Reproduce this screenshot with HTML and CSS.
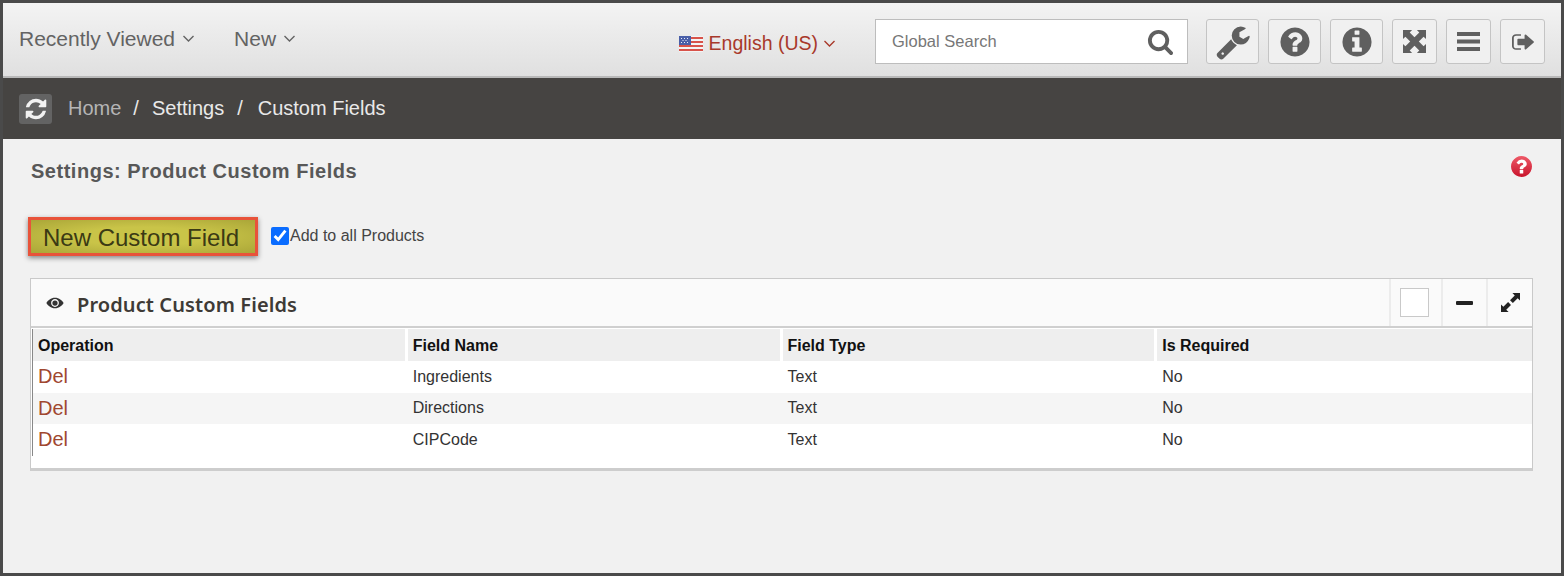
FILE: index.html
```html
<!DOCTYPE html>
<html lang="en">
<head>
<meta charset="utf-8">
<title>Product Custom Fields</title>
<link rel="stylesheet" href="styles.css">
</head>
<body>
<div class="frame">
  <header class="topbar">
    <nav class="nav">
      <a class="nav-item">Recently Viewed<svg class="chev" viewBox="0 0 12 8"><polyline points="1,1 6,6 11,1"/></svg></a>
      <a class="nav-item">New<svg class="chev" viewBox="0 0 12 8"><polyline points="1,1 6,6 11,1"/></svg></a>
    </nav>
    <div class="tools">
      <a class="lang">
        <svg class="flag" viewBox="0 0 24 16">
          <rect width="24" height="16" fill="#f4f4f4"/>
          <path d="M0 1h24v2H0zM0 5h24v2H0zM0 9h24v2H0zM0 13h24v2H0z" fill="#d8534a"/>
          <rect width="12" height="9" fill="#4a5fa8"/>
          <path d="M2 2h1v1H2zM5 2h1v1H5zM8 2h1v1H8zM3.500 4h1v1h-1zM6.500 4h1v1h-1zM2 6h1v1H2zM5 6h1v1H5zM8 6h1v1H8z" fill="#e8ecf6"/>
        </svg>
        <span>English (US)</span>
        <svg class="chev chev-red" viewBox="0 0 12 8"><polyline points="1,1 6,6 11,1"/></svg>
      </a>
      <div class="search">
        <span class="search-text">Global Search</span>
        <svg class="search-icon" viewBox="0 0 1792 1792"><path d="M1216 832q0-185-131.500-316.500t-316.500-131.500-316.500 131.500-131.500 316.500 131.500 316.500 316.500 131.500 316.500-131.500 131.500-316.500zm512 832q0 52-38 90t-90 38q-54 0-90-38l-343-342q-179 124-399 124-143 0-273.500-55.500t-225-150-150-225-55.500-273.500 55.500-273.500 150-225 225-150 273.500-55.500 273.500 55.500 225 150 150 225 55.500 273.500q0 220-124 399l343 343q37 37 37 90z"/></svg>
      </div>
      <div class="icon-buttons">
        <button class="icon-btn wide"><svg class="ico-wrench" viewBox="0 0 1792 1792"><path d="M448 1472q0-26-19-45t-45-19-45 19-19 45 19 45 45 19 45-19 19-45zm644-420l-682 682q-37 37-90 37-52 0-91-37l-106-108q-38-36-38-90 0-53 38-91l681-681q39 98 114.500 173.500t173.500 114.500zm634-435q0 39-23 106-47 134-164.500 217.500t-258.500 83.500q-185 0-316.500-131.500t-131.500-316.500 131.500-316.500 316.500-131.500q58 0 121.500 16.500t107.500 46.500q16 11 16 28t-16 28l-293 169v224l193 107q5-3 79-48.500t135.500-81 70.500-35.500q15 0 23.500 10t8.500 25z"/></svg></button>
        <button class="icon-btn wide"><svg class="ico-circle" viewBox="0 0 1792 1792"><path d="M1024 1376v-192q0-14-9-23t-23-9h-192q-14 0-23 9t-9 23v192q0 14 9 23t23 9h192q14 0 23-9t9-23zm256-672q0-88-55.500-163t-138.500-116-170-41q-243 0-371 213-15 24 8 42l132 100q7 6 19 6 16 0 25-12 53-68 86-92 34-24 86-24 48 0 85.500 26t37.500 59q0 38-20 61t-68 45q-63 28-115.500 86.500t-52.500 125.500v36q0 14 9 23t23 9h192q14 0 23-9t9-23q0-19 21.500-49.500t54.500-49.500q32-18 49-28.500t46-35 44.500-48 28-60.500 12.500-81zm384 192q0 209-103 385.500t-279.500 279.500-385.500 103-385.500-103-279.500-279.500-103-385.500 103-385.500 279.500-279.500 385.500-103 385.500 103 279.500 279.500 103 385.500z"/></svg></button>
        <button class="icon-btn wide"><svg class="ico-circle" viewBox="0 0 1792 1792"><path d="M1152 1376v-160q0-14-9-23t-23-9h-96v-512q0-14-9-23t-23-9h-320q-14 0-23 9t-9 23v160q0 14 9 23t23 9h96v320h-96q-14 0-23 9t-9 23v160q0 14 9 23t23 9h448q14 0 23-9t9-23zm-128-896v-160q0-14-9-23t-23-9h-192q-14 0-23 9t-9 23v160q0 14 9 23t23 9h192q14 0 23-9t9-23zm640 416q0 209-103 385.500t-279.500 279.500-385.500 103-385.500-103-279.500-279.500-103-385.500 103-385.500 279.500-279.500 385.500-103 385.500 103 279.500 279.500 103 385.500z"/></svg></button>
        <button class="icon-btn"><svg class="ico-expand" viewBox="0 0 24 24"><path d="M0 0h9.500L7 2.500l5 5 5-5L14.500 0H24v9.500L21.500 7l-5 5 5 5 2.500-2.500V24h-9.500l2.500-2.500-5-5-5 5L9.500 24H0v-9.500L2.500 17l5-5-5-5L0 9.500z"/></svg></button>
        <button class="icon-btn"><svg class="ico-bars" viewBox="0 0 23 19"><path d="M0 0h23v4H0zM0 7.500h23v4H0zM0 15h23v4H0z"/></svg></button>
        <button class="icon-btn"><svg class="ico-exit" viewBox="64 160 1568 1472" preserveAspectRatio="none"><path d="M704 1440q0 4 1 20t.500 26.500-3 23.500-10 19.500-20.500 6.500h-320q-119 0-203.500-84.500t-84.500-203.500v-704q0-119 84.500-203.500t203.500-84.500h320q13 0 22.500 9.500t9.500 22.500q0 4 1 20t.500 26.500-3 23.500-10 19.500-20.500 6.500h-320q-66 0-113 47t-47 113v704q0 66 47 113t113 47h312l11.500 1 11.500 3 8 5.500 7 9 2 13.500zm928-544q0 26-19 45l-544 544q-19 19-45 19t-45-19-19-45v-288h-448q-26 0-45-19t-19-45v-384q0-26 19-45t45-19h448v-288q0-26 19-45t45-19 45 19l544 544q19 19 19 45z"/></svg></button>
      </div>
    </div>
  </header>

  <div class="crumbs">
    <button class="refresh"><svg viewBox="0 0 1792 1792"><path d="M1639 1056q0 5-1 7-64 268-268 434.500t-478 166.500q-146 0-282.500-55t-243.500-157l-129 129q-19 19-45 19t-45-19-19-45v-448q0-26 19-45t45-19h448q26 0 45 19t19 45-19 45l-137 137q71 66 161 102t187 36q134 0 250-65t186-179q11-17 53-117 8-23 30-23h192q13 0 22.500 9.500t9.500 22.500zm25-800v448q0 26-19 45t-45 19h-448q-26 0-45-19t-19-45 19-45l138-138q-148-137-349-137-134 0-250 65t-186 179q-11 17-53 117-8 23-30 23h-199q-13 0-22.500-9.500t-9.500-22.500v-7q65-268 270-434.500t480-166.500q146 0 284 55.500t245 156.500l130-129q19-19 45-19t45 19 19 45z"/></svg></button>
    <a class="crumb crumb-home">Home</a>
    <span class="crumb-sep">/</span>
    <a class="crumb">Settings</a>
    <span class="crumb-sep sep-wide">/</span>
    <span class="crumb">Custom Fields</span>
  </div>

  <main class="content">
    <div class="title-row">
      <h1 class="page-title">Settings: Product Custom Fields</h1>
      <svg class="help-red" viewBox="128 128 1536 1536">
        <defs><linearGradient id="redg" x1="0" y1="0" x2="0" y2="1"><stop offset="0" stop-color="#ee5a68"/><stop offset="1" stop-color="#c8142c"/></linearGradient></defs>
        <circle cx="896" cy="896" r="768" fill="#fff"/>
        <path fill="url(#redg)" d="M1024 1376v-192q0-14-9-23t-23-9h-192q-14 0-23 9t-9 23v192q0 14 9 23t23 9h192q14 0 23-9t9-23zm256-672q0-88-55.500-163t-138.500-116-170-41q-243 0-371 213-15 24 8 42l132 100q7 6 19 6 16 0 25-12 53-68 86-92 34-24 86-24 48 0 85.500 26t37.500 59q0 38-20 61t-68 45q-63 28-115.500 86.500t-52.500 125.500v36q0 14 9 23t23 9h192q14 0 23-9t9-23q0-19 21.500-49.500t54.500-49.500q32-18 49-28.500t46-35 44.500-48 28-60.500 12.500-81zm384 192q0 209-103 385.500t-279.500 279.500-385.500 103-385.500-103-279.500-279.500-103-385.500 103-385.500 279.500-279.500 385.500-103 385.500 103 279.500 279.500 103 385.500z"/>
      </svg>
    </div>

    <div class="action-row">
      <button class="new-btn">New Custom Field</button>
      <label class="add-all"><input class="add-check" type="checkbox" checked>Add to all Products</label>
    </div>

    <section class="panel">
      <div class="panel-head">
        <svg class="eye" viewBox="0 0 24 16"><path fill-rule="evenodd" d="M12 1C6.500 1 2.500 4.500.5 8c2 3.500 6 7 11.500 7s9.500-3.500 11.500-7C21.500 4.500 17.500 1 12 1zm0 1.800c2.900 0 5.200 2.300 5.200 5.200s-2.300 5.200-5.200 5.200S6.800 10.900 6.800 8 9.100 2.800 12 2.800zM12 4.500A3.500 3.500 0 1 0 12 11.500 3.500 3.500 0 0 0 12 4.500z"/></svg>
        <h2 class="panel-title">Product Custom Fields</h2>
        <div class="panel-controls">
          <div class="ctrl ctrl-box"><span class="square"></span></div>
          <div class="ctrl ctrl-min"><span class="minus"></span></div>
          <div class="ctrl ctrl-exp"><svg class="resize" viewBox="0 0 20 20"><path d="M12 0h8v8l-2.500-2.500L12.500 10.500l-3-3 5-5zM8 20H0v-8l2.500 2.500L7.500 9.500l3 3-5 5z"/></svg></div>
        </div>
      </div>
      <div class="table-wrap">
        <table class="fields">
          <thead>
            <tr><th>Operation</th><th>Field Name</th><th>Field Type</th><th>Is Required</th></tr>
          </thead>
          <tbody>
            <tr><td><a class="del">Del</a></td><td>Ingredients</td><td>Text</td><td>No</td></tr>
            <tr class="alt"><td><a class="del">Del</a></td><td>Directions</td><td>Text</td><td>No</td></tr>
            <tr><td><a class="del">Del</a></td><td>CIPCode</td><td>Text</td><td>No</td></tr>
          </tbody>
        </table>
      </div>
    </section>
  </main>
</div>
</body>
</html>
```

FILE: styles.css
```css
* { box-sizing: border-box; }
html, body { margin: 0; padding: 0; }
body { font-family: "Liberation Sans", Arial, sans-serif; color: #333; }

.frame {
  width: 1564px;
  height: 576px;
  border: 3px solid #4a4a4a;
  display: flex;
  flex-direction: column;
  overflow: hidden;
  background: #f1f1f1;
}

/* top bar */
.topbar {
  height: 75px;
  flex: none;
  display: flex;
  align-items: center;
  justify-content: space-between;
  padding: 4px 16px 0;
  background: linear-gradient(#f3f3f3, #e0e0e0);
  border-bottom: 2px solid #b9b9b9;
}
.nav { display: flex; gap: 39px; padding-bottom: 6px; }
.nav-item { font-size: 21px; color: #636363; display: flex; align-items: center; gap: 7px; white-space: pre; }
.chev { width: 13px; height: 8px; fill: none; stroke: #636363; stroke-width: 1.4; }
.chev-red { stroke: #a8392b; }
.tools { display: flex; align-items: center; }
.lang { display: flex; align-items: center; font-size: 19.500px; color: #a8392b; margin-right: 39px; padding-top: 4px; }
.flag { width: 24px; height: 16px; margin-right: 6px; }
.lang .chev { margin-left: 5px; }
.search {
  width: 313px;
  height: 45px;
  background: #fff;
  border: 1px solid #bdbdbd;
  display: flex;
  align-items: center;
  justify-content: space-between;
  padding: 0 13px 0 16px;
  margin-right: 18px;
}
.search-text { font-size: 16.500px; color: #777; }
.search-icon { width: 27px; height: 27px; fill: #5f5f5f; }
.icon-buttons { display: flex; gap: 9px; }
.icon-btn {
  width: 45px;
  height: 45px;
  padding: 0;
  display: flex;
  align-items: center;
  justify-content: center;
  background: #f0f0f0;
  border: 1px solid #c4c4c4;
  border-radius: 3px;
}
.icon-btn.wide { width: 53px; }
.icon-btn svg { fill: #5f5f5f; display: block; }
.ico-wrench { width: 36px; height: 36px; }
.ico-circle { width: 34px; height: 34px; }
.ico-expand { width: 23px; height: 23px; }
.ico-bars { width: 23px; height: 19px; }
.ico-exit { width: 22px; height: 18px; }

/* breadcrumb */
.crumbs {
  height: 61px;
  flex: none;
  display: flex;
  align-items: center;
  padding-left: 16px;
  background: #464442;
  font-size: 20px;
  color: #e9e9e9;
}
.refresh {
  width: 33px;
  height: 30px;
  padding: 0;
  margin-right: 16px;
  display: flex;
  align-items: center;
  justify-content: center;
  background: #636363;
  border: 0;
  border-radius: 3px;
}
.refresh svg { width: 24px; height: 24px; fill: #f2f2f2; display: block; }
.crumb-home { color: #b5b5b5; }
.crumb-sep { margin: 0 13px 0 12px; }
.sep-wide { margin: 0 15px 0 13px; }

/* content */
.content { flex: 1; padding: 0 28px 0 27px; }
.title-row {
  height: 46px;
  margin-top: 18px;
  display: flex;
  justify-content: space-between;
  align-items: flex-start;
}
.page-title { margin: 2px 0 0 1px; font-size: 20px; line-height: 24px; font-weight: 700; color: #585858; letter-spacing: .52px; }
.help-red { width: 21px; height: 21px; margin: -1px 1px 0 0; }

.action-row { display: flex; align-items: flex-start; margin-left: -2px; margin-top: 14px; height: 61px; }
.new-btn {
  width: 230px;
  height: 39px;
  padding: 3px 0 0 12px;
  text-align: left;
  font-family: inherit;
  font-size: 24px;
  color: #3b3a14;
  border: 3px solid #e8533a;
  background: radial-gradient(ellipse at center, #c9c448 40%, #aaa638 100%);
  box-shadow: 0 2px 5px rgba(0, 0, 0, .45);
}
.add-all { display: flex; align-items: center; font-size: 16px; color: #444; margin-left: 13px; margin-top: 9px; height: 19px; }
.add-check { width: 18px; height: 18px; margin: 0 1px 0 0; accent-color: #0a6cff; }

/* panel */
.panel {
  height: 193px;
  background: #fff;
  border: 1px solid #c9c9c9;
  border-bottom: 3px solid #cdcdcd;
}
.panel-head {
  height: 49px;
  display: flex;
  align-items: center;
  padding-left: 15px;
  background: #fafafa;
  border-bottom: 2px solid #cfcfcf;
}
.eye { width: 18px; height: 12px; fill: #333; margin-right: 13px; }
.panel-title { margin: 3px 0 0; font-family: "Noto Sans", sans-serif; font-size: 20px; font-weight: 600; color: #3e3a36; letter-spacing: .1px; }
.panel-controls { margin-left: auto; display: flex; height: 100%; }
.ctrl { display: flex; align-items: center; justify-content: center; border-left: 2px solid #ececec; }
.ctrl-box { width: 52px; padding-right: 3px; }
.ctrl-min { width: 45px; }
.ctrl-exp { width: 46px; }
.square { width: 29px; height: 29px; background: #fff; border: 1px solid #c9c9c9; }
.minus { width: 17px; height: 4px; background: #222; border-radius: 1px; }
.resize { width: 19px; height: 19px; fill: #222; }

.table-wrap { padding: 1px 0 0 1px; }
.fields { width: 1500px; border-collapse: separate; border-spacing: 0; table-layout: fixed; border-left: 1px solid #888; font-size: 16px; }
.fields th {
  height: 32px;
  padding: 2px 0 0 5px;
  text-align: left;
  font-weight: 700;
  color: #111;
  background: #eee;
  border-right: 3px solid #fff;
}
.fields th:last-child { border-right: 0; }
.fields td { height: 31.500px; padding: 0 0 0 5px; color: #333; background: #fff; }
.fields .alt td { background: #f5f5f5; }
.del { font-size: 20px; color: #a0472f; }
```
